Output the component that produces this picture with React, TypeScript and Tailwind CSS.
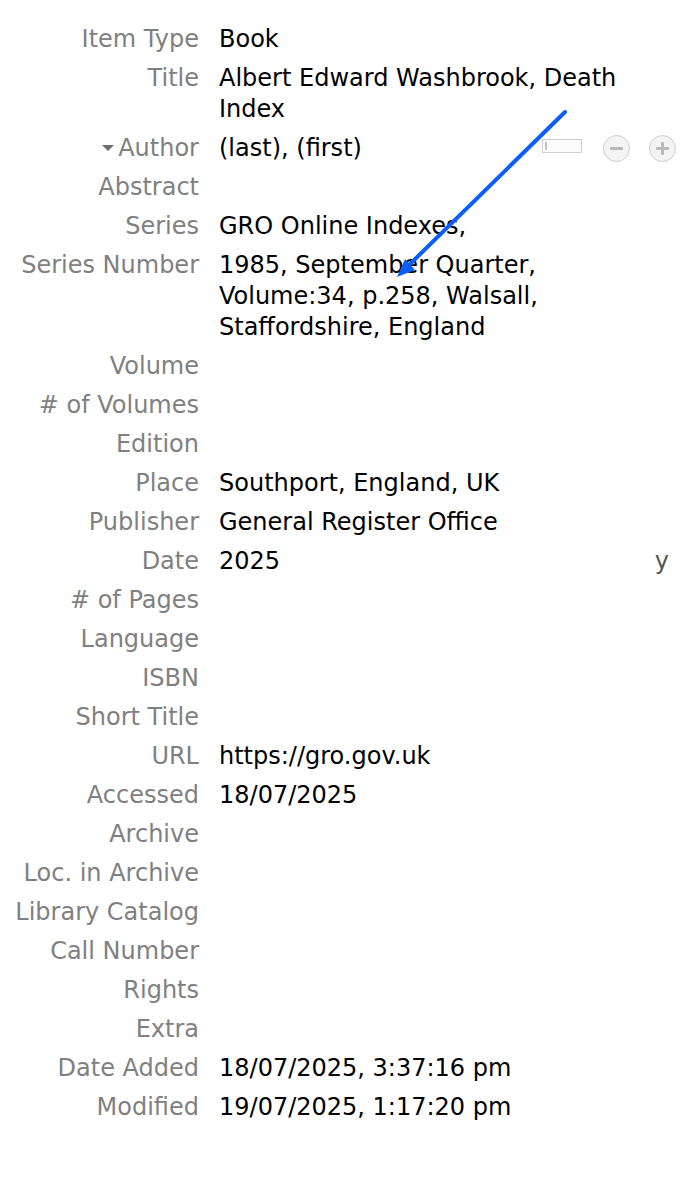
import React from "react";

type Row = { label: string; value?: string; kind?: "author" | "date" };

const rows: Row[] = [
  { label: "Item Type", value: "Book" },
  { label: "Title", value: "Albert Edward Washbrook, Death Index" },
  { label: "Author", value: "(last), (first)", kind: "author" },
  { label: "Abstract" },
  { label: "Series", value: "GRO Online Indexes," },
  {
    label: "Series Number",
    value: "1985, September Quarter, Volume:34, p.258, Walsall, Staffordshire, England",
  },
  { label: "Volume" },
  { label: "# of Volumes" },
  { label: "Edition" },
  { label: "Place", value: "Southport, England, UK" },
  { label: "Publisher", value: "General Register Office" },
  { label: "Date", value: "2025", kind: "date" },
  { label: "# of Pages" },
  { label: "Language" },
  { label: "ISBN" },
  { label: "Short Title" },
  { label: "URL", value: "https://gro.gov.uk" },
  { label: "Accessed", value: "18/07/2025" },
  { label: "Archive" },
  { label: "Loc. in Archive" },
  { label: "Library Catalog" },
  { label: "Call Number" },
  { label: "Rights" },
  { label: "Extra" },
  { label: "Date Added", value: "18/07/2025, 3:37:16 pm" },
  { label: "Modified", value: "19/07/2025, 1:17:20 pm" },
];

function CircleBtn({ plus }: { plus?: boolean }) {
  return (
    <div className="relative w-[27px] h-[27px] rounded-full border-[1.5px] border-[#cdcdcd] bg-[#f4f4f4] flex items-center justify-center">
      <div className="absolute w-[13px] h-[3px] bg-[#b9b9b9] rounded-[1px]" />
      {plus && <div className="absolute w-[3px] h-[13px] bg-[#b9b9b9] rounded-[1px]" />}
    </div>
  );
}

export default function App() {
  return (
    <div
      className="relative w-[690px] h-[1198px] bg-white overflow-hidden"
      style={{ fontFamily: '"DejaVu Sans", "Liberation Sans", sans-serif' }}
    >
      <div className="grid grid-cols-[199px_1fr] gap-x-5 pt-[20px] pr-[14px] text-[24px] leading-[31px]">
        {rows.map((r) => (
          <React.Fragment key={r.label}>
            <div className="py-1 text-right text-[#808080] whitespace-nowrap flex justify-end items-start">
              {r.kind === "author" && (
                <span className="mr-[4px] mt-[12px] w-0 h-0 border-l-[6px] border-r-[6px] border-t-[6px] border-l-transparent border-r-transparent border-t-[#6e6e6e]" />
              )}
              <span>{r.label}</span>
            </div>
            <div className="py-1 text-black min-h-[39px]">
              {r.kind === "author" ? (
                <div className="flex items-center">
                  <span>{r.value}</span>
                  <div className="flex-1" />
                  <div className="relative w-[40px] h-[14px] border border-[#cfcfcf] bg-[#fbfbfb] mt-[-5px]">
                    <div className="absolute left-[2px] top-[2px] w-[2px] h-[8px] bg-[#c4c4c4]" />
                  </div>
                  <div className="ml-[21px]">
                    <CircleBtn />
                  </div>
                  <div className="ml-[19px]">
                    <CircleBtn plus />
                  </div>
                </div>
              ) : r.kind === "date" ? (
                <div className="flex">
                  <span>{r.value}</span>
                  <span className="ml-auto mr-[7px] text-[#555555]">y</span>
                </div>
              ) : (
                r.value
              )}
            </div>
          </React.Fragment>
        ))}
      </div>
      <svg className="absolute inset-0 pointer-events-none" width="690" height="1198">
        <line x1="565" y1="112" x2="407" y2="267" stroke="#0a5efc" strokeWidth="4" strokeLinecap="round" />
        <polygon points="397,277 415,270 405,259" fill="#0a5efc" />
      </svg>
    </div>
  );
}
